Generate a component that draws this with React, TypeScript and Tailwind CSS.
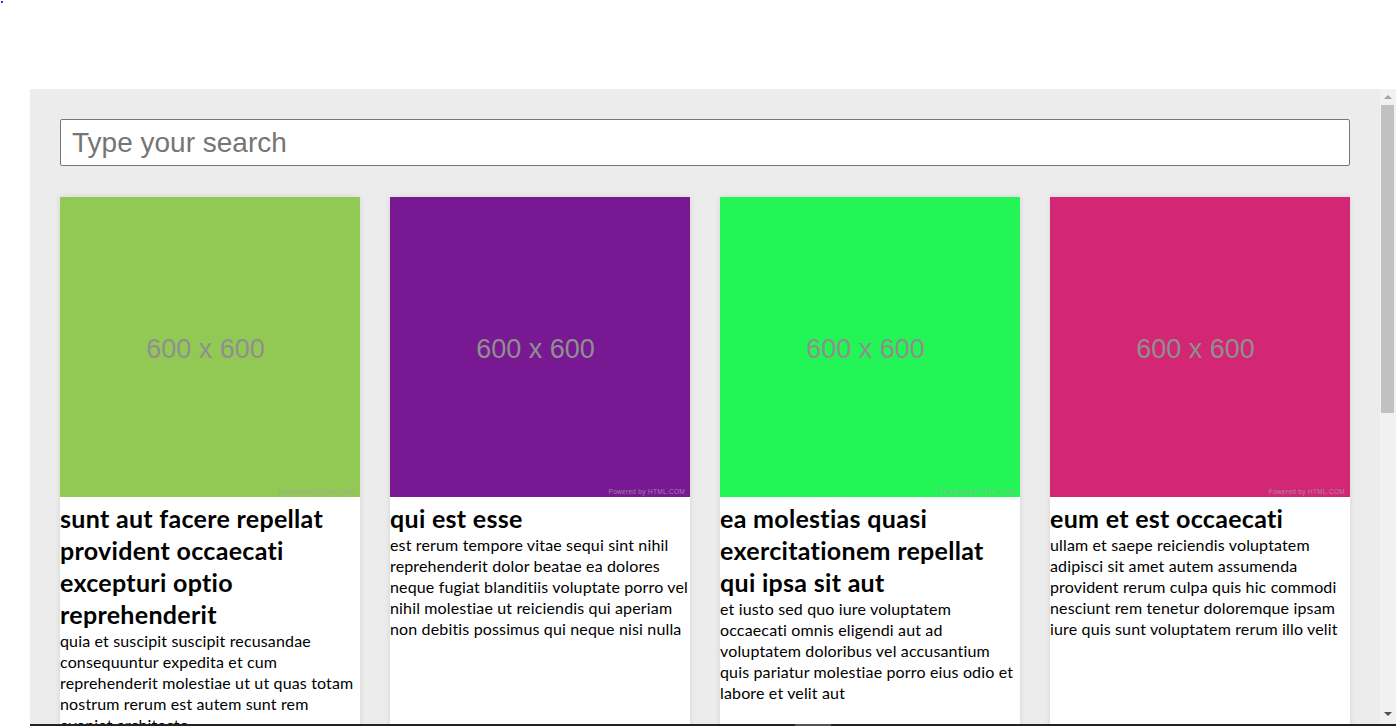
import React from 'react';

const posts = [
  {
    color: '#92c955',
    title: 'sunt aut facere repellat provident occaecati excepturi optio reprehenderit',
    body: 'quia et suscipit suscipit recusandae consequuntur expedita et cum reprehenderit molestiae ut ut quas totam nostrum rerum est autem sunt rem eveniet architecto',
  },
  {
    color: '#781893',
    title: 'qui est esse',
    body: 'est rerum tempore vitae sequi sint nihil reprehenderit dolor beatae ea dolores neque fugiat blanditiis voluptate porro vel nihil molestiae ut reiciendis qui aperiam non debitis possimus qui neque nisi nulla',
  },
  {
    color: '#23f556',
    title: 'ea molestias quasi exercitationem repellat qui ipsa sit aut',
    body: 'et iusto sed quo iure voluptatem occaecati omnis eligendi aut ad voluptatem doloribus vel accusantium quis pariatur molestiae porro eius odio et labore et velit aut',
  },
  {
    color: '#d32775',
    title: 'eum et est occaecati',
    body: 'ullam et saepe reiciendis voluptatem adipisci sit amet autem assumenda provident rerum culpa quis hic commodi nesciunt rem tenetur doloremque ipsam iure quis sunt voluptatem rerum illo velit',
  },
  {
    color: '#3b7fd1',
    title: 'nesciunt quas odio',
    body: 'repudiandae veniam quaerat sunt sed alias aut fugiat sit autem sed est voluptatem omnis possimus esse voluptatibus quis est aut tenetur dolor neque',
  },
  {
    color: '#e8a23a',
    title: 'dolorem eum magni eos aperiam quia',
    body: 'ut aspernatur corporis harum nihil quis provident sequi mollitia nobis aliquid molestiae perspiciatis et ea nemo ab reprehenderit accusantium quas voluptate dolores velit et doloremque molestiae',
  },
  {
    color: '#2ac2c9',
    title: 'magnam facilis autem',
    body: 'dolore placeat quibusdam ea quo vitae magni quis enim qui quis quo nemo aut saepe quidem repellat excepturi ut quia sunt ut sequi eos ea sed quas',
  },
  {
    color: '#c93a2a',
    title: 'dolorem dolore est ipsam',
    body: 'dignissimos aperiam dolorem qui eum facilis quibusdam animi sint suscipit qui sint possimus cum quaerat magni maiores excepturi ipsam ut commodi dolor voluptatum modi aut vitae',
  },
];

function Placeholder({ color }: { color: string }) {
  // stands in for the 600x600 placeholder image
  return (
    <div className="flex h-[300px] w-full flex-col" style={{ backgroundColor: color }}>
      <div className="flex flex-1 items-center justify-center pr-[9px] pt-[14px]">
        <span className="font-['Liberation_Sans',Arial,sans-serif] text-[27px] leading-none text-[#8f8f8f]">600 x 600</span>
      </div>
      <div className="flex justify-end pb-[2px] pr-[5px]">
        <span className="font-['Liberation_Sans',Arial,sans-serif] text-[6.5px] leading-none tracking-[0.3px] text-[#a3a3a3]/80">Powered by HTML.COM</span>
      </div>
    </div>
  );
}

function PostCard({ post }: { post: (typeof posts)[number] }) {
  return (
    <div className="bg-white shadow-[0_0_6px_rgba(0,0,0,0.1)]">
      <Placeholder color={post.color} />
      <h2 className="mt-[5px] text-[25px] font-bold leading-[32px] tracking-[0.3px] text-black">{post.title}</h2>
      <p className="text-[16px] leading-[21px] tracking-[0.15px] text-black">{post.body}</p>
    </div>
  );
}

function ScrollBar() {
  return (
    <div className="flex w-[16px] shrink-0 flex-col bg-[#f1f1f1]">
      <div className="flex h-[16px] items-center justify-center">
        <div className="h-0 w-0 border-x-[4px] border-b-[4px] border-x-transparent border-b-[#a3a3a3]" />
      </div>
      <div className="ml-[1px] h-[308px] w-[13px] bg-[#c1c1c1]" />
      <div className="flex-1" />
      <div className="flex h-[16px] items-center justify-center pb-[4px]">
        <div className="h-0 w-0 border-x-[4px] border-t-[4px] border-x-transparent border-t-[#505050]" />
      </div>
    </div>
  );
}

export default function App() {
  return (
    <div className="h-[726px] w-[1396px] overflow-hidden bg-white font-['Lato','Noto_Sans',sans-serif]">
      <div className="h-[89px] pl-[1px] pt-[1px]">
        <div className="h-[2px] w-[2px] bg-[#2a3bd8]" />
      </div>
      <div className="ml-[30px] flex h-[635px] bg-[#ececec]">
        <div className="min-w-0 flex-1 overflow-hidden px-[30px] pt-[30px]">
          <input
            type="text"
            placeholder="Type your search"
            className="h-[47px] w-full rounded-[2px] border border-[#767676] bg-white px-[11px] font-['Liberation_Sans',Arial,sans-serif] text-[28px] text-black outline-none placeholder:text-[#757575]"
          />
          <div className="mt-[31px] grid grid-cols-4 gap-[30px] pb-[30px]">
            {posts.map((p) => (
              <PostCard key={p.title} post={p} />
            ))}
          </div>
        </div>
        <ScrollBar />
      </div>
      <div className="ml-[30px] flex h-[2px] bg-[#222]">
        <div className="w-[765px]" />
        <div className="w-[36px] bg-[#555]" />
      </div>
    </div>
  );
}
